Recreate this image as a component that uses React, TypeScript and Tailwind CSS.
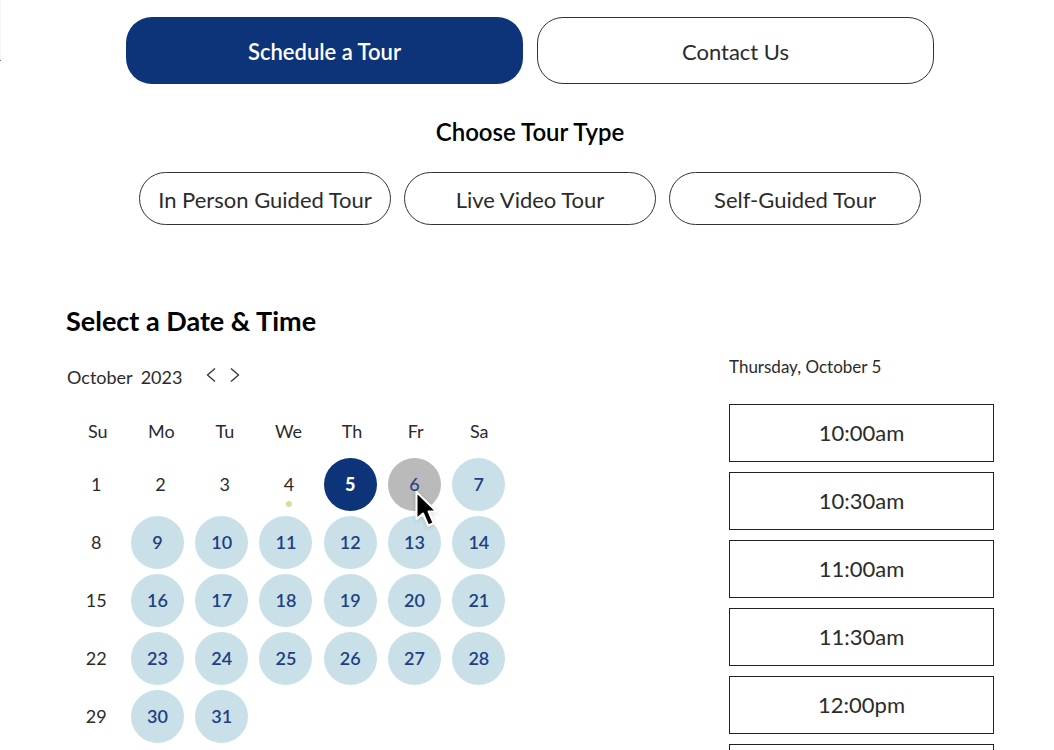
import { useState } from "react";

const weekdays = ["Su", "Mo", "Tu", "We", "Th", "Fr", "Sa"];
const weeks = [
  [1, 2, 3, 4, 5, 6, 7],
  [8, 9, 10, 11, 12, 13, 14],
  [15, 16, 17, 18, 19, 20, 21],
  [22, 23, 24, 25, 26, 27, 28],
  [29, 30, 31],
];
const times = ["10:00am", "10:30am", "11:00am", "11:30am", "12:00pm", "12:30pm"];
const tourTypes = ["In Person Guided Tour", "Live Video Tour", "Self-Guided Tour"];
const TODAY = 4;
const HOVERED = 6;

function isOpen(day: number) {
  return day > TODAY && day % 7 !== 1;
}

function Pointer() {
  return (
    <svg
      className="pointer-events-none absolute top-8 left-[26px] z-10 drop-shadow-sm"
      width="26"
      height="40"
      viewBox="0 0 26 40"
      aria-hidden="true"
    >
      <path
        d="M2.5 2 L2.5 29 L9 23.5 L14.2 35.5 L19.6 33.2 L14.6 21.5 L22.5 21.5 Z"
        fill="#000"
        stroke="#fff"
        strokeWidth="2"
        strokeLinejoin="round"
      />
    </svg>
  );
}

function Day({ day, selected, onSelect }: { day: number; selected: boolean; onSelect: () => void }) {
  if (!isOpen(day)) {
    return (
      <span className="relative flex h-[53px] items-center justify-center pl-[6px] text-[#2b2b2b]">
        {day}
        {day === TODAY && (
          <span className="absolute bottom-1 left-1/2 size-[6px] rounded-full bg-[#d5dd9c]" />
        )}
      </span>
    );
  }
  const tone = selected
    ? "bg-[#0d3479] font-black text-white"
    : day === HOVERED
      ? "bg-[#bababa] font-medium text-[#2a4482]"
      : "bg-[#c9e0e8] font-semibold text-[#1d3f83]";
  return (
    <div className="relative mx-auto size-[53px]">
      <button type="button" onClick={onSelect} className={`size-full rounded-full ${tone}`}>
        {day}
      </button>
      {day === HOVERED && <Pointer />}
    </div>
  );
}

function Chevron({ d }: { d: string }) {
  return (
    <svg width="10" height="16" viewBox="0 0 10 16" fill="none" stroke="#333" strokeWidth="1.3" aria-hidden="true">
      <path d={d} />
    </svg>
  );
}

export default function App() {
  const [selected, setSelected] = useState(5);

  return (
    <div className="relative min-h-screen overflow-hidden bg-white font-['Lato','Noto_Sans',sans-serif] text-[#2b2b2b]">
      <div className="absolute top-0 left-0 h-[61px] w-px border-b border-[#777] bg-[#f4f4f4]" />
      <main className="pt-[17px] pr-[60px] pb-10 pl-[66px]">
        <div className="mx-auto grid max-w-[808px] grid-cols-2 gap-[14px] text-[22px]">
          <button type="button" className="h-[67px] rounded-[26px] bg-[#0d3479] pt-[2px] font-semibold text-white">
            Schedule a Tour
          </button>
          <button type="button" className="h-[67px] rounded-[26px] border border-[#333] pt-[2px]">
            Contact Us
          </button>
        </div>

        <h2 className="mt-8 text-center text-[24px] leading-8 font-semibold text-black">Choose Tour Type</h2>
        <div className="mx-auto mt-6 grid max-w-[782px] grid-cols-3 gap-[13px] text-[22px]">
          {tourTypes.map((t) => (
            <button key={t} type="button" className="h-[53px] rounded-full border border-[#333] pt-[2px] whitespace-nowrap">
              {t}
            </button>
          ))}
        </div>

        <h2 className="mt-20 text-[27px] leading-8 font-bold text-black">Select a Date &amp; Time</h2>

        <div className="mt-4 flex items-start justify-between gap-8">
          <section className="-ml-[5px] w-[450px] shrink-0 pt-2">
            <div className="flex h-8 items-center pl-[6px] text-[18px]">
              <span className="mr-2">October</span>
              <span>2023</span>
              <div className="mb-1 ml-6 flex gap-[14px]">
                <button type="button" aria-label="Previous month">
                  <Chevron d="M9 1.5 L1.5 8 L9 14.5" />
                </button>
                <button type="button" aria-label="Next month">
                  <Chevron d="M1 1.5 L8.5 8 L1 14.5" />
                </button>
              </div>
            </div>
            <table className="mt-5 block w-full text-[18px]">
              <thead className="block pl-[5px]">
                <tr className="grid h-9 grid-cols-7 items-center">
                  {weekdays.map((d) => (
                    <th key={d} scope="col" className="font-normal">
                      {d}
                    </th>
                  ))}
                </tr>
              </thead>
              <tbody className="mt-[9px] grid gap-[5px]">
                {weeks.map((week) => (
                  <tr key={week[0]} className="grid grid-cols-7">
                    {week.map((day) => (
                      <td key={day}>
                        <Day day={day} selected={day === selected} onSelect={() => setSelected(day)} />
                      </td>
                    ))}
                  </tr>
                ))}
              </tbody>
            </table>
          </section>

          <section className="w-[265px] shrink-0">
            <h3 className="text-[17px] leading-7">Thursday, October 5</h3>
            <div className="mt-[23px] grid gap-[10px] text-[22px]">
              {times.map((t) => (
                <button key={t} type="button" className="h-[58px] border border-[#222] pb-[2px]">
                  {t}
                </button>
              ))}
            </div>
          </section>
        </div>
      </main>
    </div>
  );
}
